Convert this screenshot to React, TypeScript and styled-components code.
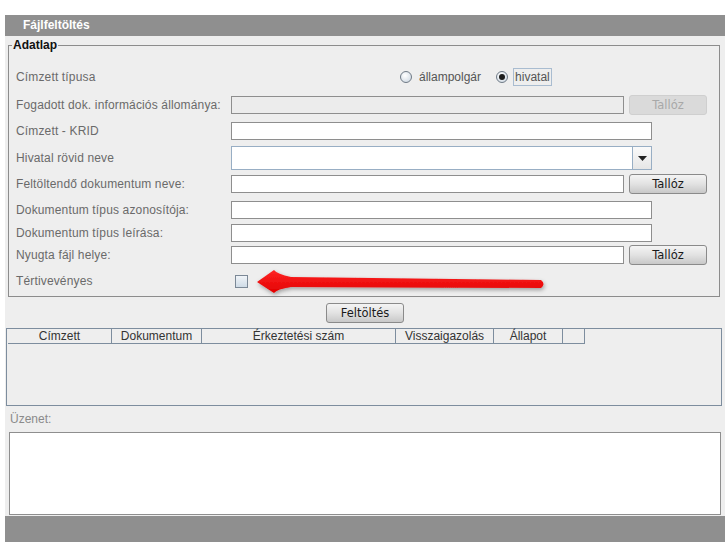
import React from 'react';
import styled, { createGlobalStyle } from 'styled-components';

const GlobalStyle = createGlobalStyle`
  html, body {
    margin: 0;
    padding: 0;
    background: #ffffff;
  }
  body {
    font-family: "Liberation Sans", Arial, sans-serif;
    font-size: 12px;
  }
`;

const Page = styled.div`
  width: 720px;
  margin: 15px 0 0 5px;
  background: #eeeeee;
  display: flex;
  flex-direction: column;
`;

const TitleBar = styled.div`
  height: 21px;
  background: #8f8f8f;
  color: #ffffff;
  font-weight: bold;
  font-size: 12px;
  line-height: 21px;
  padding-left: 18px;
`;

const FieldSet = styled.fieldset`
  position: relative;
  margin: 2px 5px 0 3px;
  padding: 11px 0 3px 0;
  border: 1px solid #8c8c8c;
  min-width: 0;
`;

const Legend = styled.legend`
  padding: 0 1px;
  margin-left: 3px;
  font-weight: bold;
  color: #111111;
  font-size: 12px;
  line-height: 14px;
`;

const FormBody = styled.div`
  padding-left: 7px;
  display: flex;
  flex-direction: column;
`;

const Row = styled.div<{ $h: number }>`
  display: flex;
  align-items: center;
  height: ${p => p.$h}px;
`;

const Label = styled.div`
  width: 215px;
  flex-shrink: 0;
  color: #6a6a6a;
  font-size: 12px;
  letter-spacing: 0.15px;
  white-space: nowrap;
`;

const TextInput = styled.div<{ $w: number; $disabled?: boolean }>`
  width: ${p => p.$w}px;
  height: 16px;
  box-sizing: content-box;
  border: 1px solid #8e8e8e;
  background: ${p => (p.$disabled ? '#ececec' : '#ffffff')};
`;

const Button = styled.div<{ $disabled?: boolean }>`
  width: 76px;
  height: 18px;
  margin-left: 5px;
  border: 1px solid ${p => (p.$disabled ? '#cfcfcf' : '#8a8a8a')};
  border-radius: 3px;
  background: ${p =>
    p.$disabled ? '#dadada' : 'linear-gradient(#f4f4f4, #e2e2e2 50%, #c8c8c8)'};
  color: ${p => (p.$disabled ? '#a8a8a8' : '#1a1a1a')};
  font-family: "DejaVu Sans", Verdana, sans-serif;
  font-size: 11.5px;
  display: flex;
  align-items: center;
  justify-content: center;
`;

const RadioGroup = styled.div`
  display: flex;
  align-items: center;
  margin-left: 169px;
  color: #555555;
`;

const RadioCircle = styled.span<{ $checked?: boolean }>`
  width: 10px;
  height: 10px;
  border-radius: 50%;
  border: 1px solid #6f7a86;
  background: radial-gradient(circle at 40% 35%, #ffffff, #c9d4df);
  display: flex;
  align-items: center;
  justify-content: center;
  margin-right: 5px;
  &::after {
    content: '';
    display: ${p => (p.$checked ? 'block' : 'none')};
    width: 6px;
    height: 6px;
    border-radius: 50%;
    background: #1c1c1c;
  }
`;

const RadioText = styled.span<{ $focused?: boolean }>`
  padding: 1px 1px;
  border: 1px solid ${p => (p.$focused ? '#a9bcd0' : 'transparent')};
  margin-right: 13px;
  color: #555555;
`;

const Combo = styled.div`
  width: 419px;
  height: 22px;
  border: 1px solid #98aec4;
  background: #ffffff;
  display: flex;
  justify-content: flex-end;
`;

const ComboArrow = styled.div`
  width: 18px;
  border-left: 1px solid #98aec4;
  background: linear-gradient(#fafafa, #e6e6e6);
  display: flex;
  align-items: center;
  justify-content: center;
`;

const CheckBox = styled.div`
  width: 11px;
  height: 11px;
  margin-left: 4px;
  border: 1px solid #7b8896;
  background: linear-gradient(#f0f4f8, #cfdbe6);
`;

const Arrow = styled.svg`
  position: absolute;
  left: 238px;
  top: 214px;
  overflow: visible;
`;

const ActionBar = styled.div`
  display: flex;
  justify-content: center;
  padding: 6px 0 5px;
`;

const UploadButton = styled(Button)`
  margin-left: 0;
`;

const Table = styled.div`
  height: 76px;
  margin: 0 3px 0 1px;
  border: 1px solid #7d8d9e;
`;

const HeaderRow = styled.div`
  display: flex;
  height: 15px;
  margin-left: 1px;
`;

const HeaderCell = styled.div<{ $w: number }>`
  width: ${p => p.$w}px;
  box-sizing: border-box;
  border-right: 1px solid #7d8d9e;
  border-bottom: 1px solid #7d8d9e;
  color: #333333;
  font-size: 12px;
  line-height: 15px;
  text-align: center;
`;

const MessageLabel = styled.div`
  color: #8a8a8a;
  font-size: 12px;
  padding: 6px 0 0 5px;
  height: 20px;
`;

const MessageBox = styled.div`
  height: 81px;
  margin: 0 4px 0 4px;
  border: 1px solid #8e8e8e;
  background: #ffffff;
`;

const FooterBar = styled.div`
  height: 26px;
  margin-top: 1px;
  background: #8f8f8f;
`;

const columns: [string, number][] = [
  ['Címzett', 104],
  ['Dokumentum', 90],
  ['Érkeztetési szám', 194],
  ['Visszaigazolás', 98],
  ['Állapot', 69],
  ['', 22],
];

const App: React.FC = () => {
  return (
    <>
      <GlobalStyle />
      <Page>
        <TitleBar>Fájlfeltöltés</TitleBar>
        <FieldSet>
          <Legend>Adatlap</Legend>

          <FormBody>
            <Row $h={28}>
              <Label>Címzett típusa</Label>
              <RadioGroup>
                <RadioCircle />
                <RadioText>állampolgár</RadioText>
                <RadioCircle $checked />
                <RadioText $focused>hivatal</RadioText>
              </RadioGroup>
            </Row>

            <Row $h={28}>
              <Label>Fogadott dok. információs állománya:</Label>
              <TextInput $w={391} $disabled />
              <Button $disabled>Tallóz</Button>
            </Row>

            <Row $h={24}>
              <Label>Címzett - KRID</Label>
              <TextInput $w={419} />
            </Row>

            <Row $h={30}>
              <Label>Hivatal rövid neve</Label>
              <Combo>
                <ComboArrow>
                  <svg width="9" height="5" viewBox="0 0 9 5">
                    <path d="M0 0 H9 L4.5 5 Z" fill="#222" />
                  </svg>
                </ComboArrow>
              </Combo>
            </Row>

            <Row $h={22}>
              <Label>Feltöltendő dokumentum neve:</Label>
              <TextInput $w={391} />
              <Button>Tallóz</Button>
            </Row>

            <Row $h={30}>
              <Label>Dokumentum típus azonosítója:</Label>
              <TextInput $w={419} />
            </Row>

            <Row $h={16}>
              <Label>Dokumentum típus leírása:</Label>
              <TextInput $w={419} />
            </Row>

            <Row $h={28}>
              <Label>Nyugta fájl helye:</Label>
              <TextInput $w={391} />
              <Button>Tallóz</Button>
            </Row>

            <Row $h={24}>
              <Label>Tértivevényes</Label>
              <CheckBox />
            </Row>
          </FormBody>

          <Arrow width="300" height="32" viewBox="0 0 300 32">
            <defs>
              <filter id="sh" x="-10%" y="-50%" width="120%" height="200%">
                <feGaussianBlur in="SourceAlpha" stdDeviation="2" />
                <feOffset dx="1" dy="2" result="b" />
                <feComponentTransfer>
                  <feFuncA type="linear" slope="0.35" />
                </feComponentTransfer>
                <feMerge>
                  <feMergeNode />
                  <feMergeNode in="SourceGraphic" />
                </feMerge>
              </filter>
              <linearGradient id="rg" x1="0" y1="0" x2="0" y2="1">
                <stop offset="0" stopColor="#ff2626" />
                <stop offset="1" stopColor="#e20000" />
              </linearGradient>
            </defs>
            <path
              d="M10 16 L27 4 Q30 8 44 11 L294 14 Q299 18 294 22 L44 21 Q30 23 27 27 Z"
              fill="url(#rg)"
              filter="url(#sh)"
            />
          </Arrow>
        </FieldSet>

        <ActionBar>
          <UploadButton>Feltöltés</UploadButton>
        </ActionBar>

        <Table>
          <HeaderRow>
            {columns.map(([title, w], i) => (
              <HeaderCell key={i} $w={w}>
                {title}
              </HeaderCell>
            ))}
          </HeaderRow>
        </Table>

        <MessageLabel>Üzenet:</MessageLabel>
        <MessageBox />
        <FooterBar />
      </Page>
    </>
  );
};

export default App;
